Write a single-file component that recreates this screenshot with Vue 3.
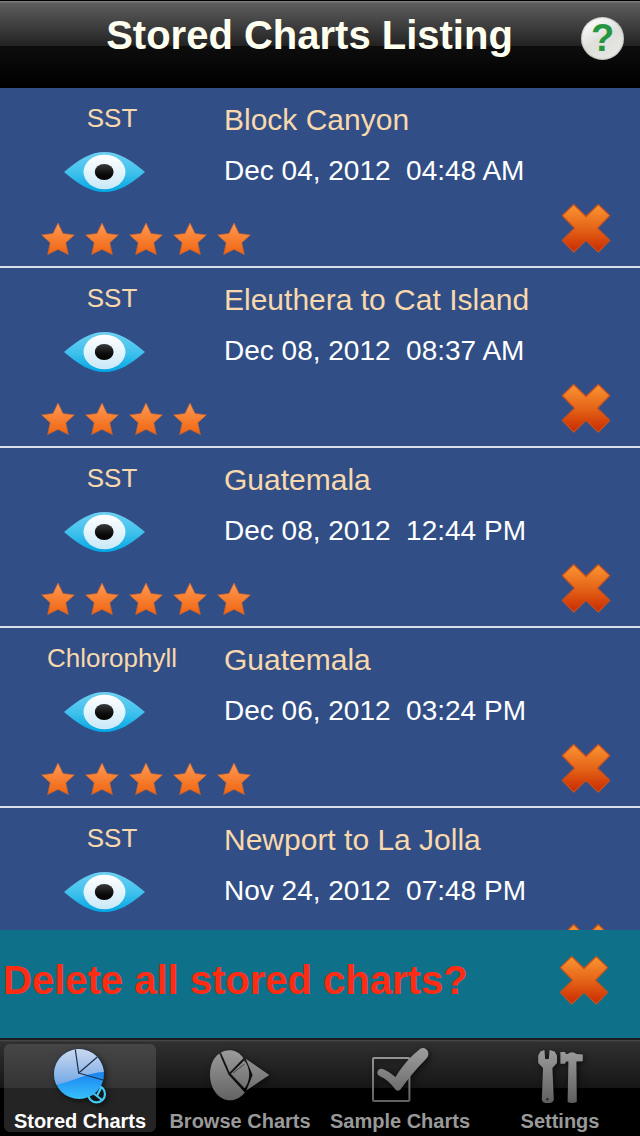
<template>
  <div class="app">
    <!-- Shared gradients and shapes -->
    <svg class="defs" width="0" height="0" aria-hidden="true">
      <defs>
        <linearGradient id="cross-fill" x1="0" y1="0" x2="0" y2="1">
          <stop offset="0" stop-color="#fb9432" />
          <stop offset="0.5" stop-color="#e56518" />
          <stop offset="1" stop-color="#c92a00" />
        </linearGradient>
        <linearGradient id="star-fill" x1="0" y1="0" x2="0" y2="1">
          <stop offset="0" stop-color="#ff9a52" />
          <stop offset="1" stop-color="#ee6410" />
        </linearGradient>
        <linearGradient id="eye-fill" x1="0" y1="0" x2="0" y2="1">
          <stop offset="0" stop-color="#6fd0f2" />
          <stop offset="0.55" stop-color="#3cc0ec" />
          <stop offset="1" stop-color="#00a6e4" />
        </linearGradient>
        <linearGradient id="iris-fill" x1="0" y1="0" x2="0" y2="1">
          <stop offset="0" stop-color="#ffffff" />
          <stop offset="1" stop-color="#c9e8f8" />
        </linearGradient>
        <linearGradient id="pupil-fill" x1="0" y1="0" x2="0" y2="1">
          <stop offset="0" stop-color="#3a3a3a" />
          <stop offset="0.6" stop-color="#0c0c0c" />
          <stop offset="1" stop-color="#000000" />
        </linearGradient>
        <linearGradient id="pie-top" x1="0" y1="0" x2="0" y2="1">
          <stop offset="0" stop-color="#cbd8ef" />
          <stop offset="1" stop-color="#72a8e6" />
        </linearGradient>
        <linearGradient id="pie-bottom" x1="0" y1="0" x2="0" y2="1">
          <stop offset="0.4" stop-color="#147cf0" />
          <stop offset="1" stop-color="#38c0fa" />
        </linearGradient>
        <linearGradient id="gray-fill" gradientUnits="userSpaceOnUse" x1="0" y1="0" x2="0" y2="60">
          <stop offset="0" stop-color="#a0a0a0" />
          <stop offset="1" stop-color="#5c5c5c" />
        </linearGradient>
        <symbol id="cross" viewBox="0 0 50 50">
          <path
            d="M12.7 1.5 L25 13.5 L37.3 1.5 L48.8 12.6 L36.5 25.2 L48.8 37.4 L37.3 49 L25 37.4 L12.7 49 L1.2 37.4 L13.5 25.2 L1.2 12.6Z"
            fill="url(#cross-fill)"
            stroke="#c9501c"
            stroke-width="1.2"
            stroke-linejoin="round"
          />
        </symbol>
        <symbol id="star" viewBox="0 0 34 34">
          <path
            d="M17 1 L22 11.4 L33.4 12.9 L24.8 20.8 L27.4 32.6 L17 27.4 L6.6 32.6 L9.2 20.8 L0.6 12.9 L12 11.4Z"
            fill="url(#star-fill)"
            stroke="#c9602c"
            stroke-width="0.6"
          />
        </symbol>
      </defs>
    </svg>

    <header class="header">
      <h1 class="title">Stored Charts Listing</h1>
      <button class="help-btn" aria-label="Help">?</button>
    </header>

    <!-- Chart list -->
    <ul class="chart-list">
      <li v-for="chart in charts" :key="chart.id" class="chart-row">
        <div class="chart-preview">
          <span class="chart-type">{{ chart.type }}</span>
          <button class="icon-btn eye-btn" :aria-label="`View ${chart.name}`">
            <svg width="81" height="40" viewBox="0 0 81 40">
              <path
                d="M0 20 C15 7 27 0 40.5 0 C54 0 66 7 81 20 C66 33 54 40 40.5 40 C27 40 15 33 0 20Z"
                fill="url(#eye-fill)"
              />
              <ellipse cx="40.5" cy="20" rx="21" ry="17.3" fill="url(#iris-fill)" />
              <ellipse cx="40.2" cy="20" rx="9.4" ry="8.1" fill="url(#pupil-fill)" />
            </svg>
          </button>
          <div class="stars" role="img" :aria-label="`${chart.stars} stars`">
            <svg v-for="n in chart.stars" :key="n" class="star" width="34" height="34">
              <use href="#star" />
            </svg>
          </div>
        </div>
        <div class="chart-info">
          <h2 class="chart-name">{{ chart.name }}</h2>
          <p class="chart-date">{{ chart.date }}&nbsp; {{ chart.time }}</p>
        </div>
        <button
          class="icon-btn delete-btn"
          :aria-label="`Delete ${chart.name}`"
          @click="deleteChart(chart.id)"
        >
          <svg width="50" height="50"><use href="#cross" /></svg>
        </button>
      </li>
    </ul>

    <!-- Delete all -->
    <section class="delete-all">
      <p class="delete-all-text">Delete all stored charts?</p>
      <button class="icon-btn" aria-label="Delete all stored charts" @click="deleteAll">
        <svg width="50" height="50"><use href="#cross" /></svg>
      </button>
    </section>

    <!-- Tab bar -->
    <nav class="tab-bar">
      <button
        v-for="tab in tabs"
        :key="tab.id"
        :class="['tab', { active: activeTab === tab.id }]"
        @click="activeTab = tab.id"
      >
        <svg v-if="tab.id === 'stored'" class="tab-icon" viewBox="0 0 100 60">
          <circle cx="66.6" cy="48" r="8.4" fill="#10181c" stroke="#44c8f4" stroke-width="2.2" />
          <path d="M58 43 L72 54 M67 50 L71.4 41" stroke="#44c8f4" stroke-width="2.2" />
          <circle cx="49" cy="28" r="25" fill="url(#pie-bottom)" />
          <path d="M26.4 38.8 A25 25 0 1 1 73.9 26 Q62 26.5 50 31.5 Q38 36 26.4 38.8Z" fill="url(#pie-top)" />
          <path
            d="M45.3 3.3 L48.7 27 L67.3 11 M48.7 27 L73 34"
            fill="none"
            stroke="#20304a"
            stroke-width="1.2"
          />
        </svg>
        <svg v-else-if="tab.id === 'browse'" class="tab-icon" viewBox="0 0 100 60">
          <g fill="url(#gray-fill)">
            <path d="M29.3 7.6 C23 12 20 20 20 29 C20 43 29 54.3 40 54.3 C46 54.3 51 51 54.8 46.4 L38.6 28.8Z" />
            <path d="M31 6.6 C38 2.4 48 3.6 53.4 12.2 L39.6 26.6Z" />
            <path d="M40.8 27.8 L54.2 14.4 C61 22 60.5 35 54.6 42.2Z" />
            <path d="M55.8 12.8 L79.3 29 L56.4 44.6 L62.6 29Z" />
          </g>
          <path d="M43 27 L54.5 18" stroke="#444" stroke-width="1" />
        </svg>
        <svg v-else-if="tab.id === 'sample'" class="tab-icon" viewBox="0 0 100 60">
          <rect
            x="23"
            y="12"
            width="36.4"
            height="43"
            rx="1"
            fill="none"
            stroke="url(#gray-fill)"
            stroke-width="2"
          />
          <path
            d="M27.4 26.4 C27.6 23 31 22 34 23.4 C38 25.2 42 28 45.6 31 C52.4 20 61 10 70.6 2.6 C74 0.4 78.6 3.6 78.4 8 C78.2 10.6 77 12 75.6 13.4 C66 22.6 57.6 33.6 50.8 43 C49.2 45.2 46.6 45.2 45 43 C41 37.4 35.6 32.6 30.4 30.4 C28.4 29.6 27.2 28.4 27.4 26.4Z"
            fill="url(#gray-fill)"
          />
        </svg>
        <svg v-else class="tab-icon" viewBox="0 0 100 60">
          <g fill="url(#gray-fill)">
            <path
              d="M34.4 4 L35.2 13 L38.8 13 L39.6 4 L44.6 5.6 L47 9.6 L47 17 L42.4 22 L43.8 53.4 Q43.4 57 37.8 57 Q32 57 31.8 53.4 L33 22 L28.2 17 L28.2 9.6 L30.4 5.6Z"
            />
            <path
              d="M50.4 6 L55 6 L55.8 8 L57.6 8 Q62 4.6 66.6 8 L72.8 8.6 L72.8 15.2 L66.4 15.4 L66.8 56 Q62 57.8 57.6 56 L58.4 15.6 L56.2 15.4 L55 17.8 L50.4 17.8Z"
            />
          </g>
          <circle cx="37.4" cy="53.2" r="1.2" fill="#2a2a2a" />
        </svg>
        <span class="tab-label">{{ tab.label }}</span>
      </button>
    </nav>
  </div>
</template>

<script setup>
import { ref } from 'vue'

const charts = ref([
  { id: 1, type: 'SST', name: 'Block Canyon', date: 'Dec 04, 2012', time: '04:48 AM', stars: 5 },
  { id: 2, type: 'SST', name: 'Eleuthera to Cat Island', date: 'Dec 08, 2012', time: '08:37 AM', stars: 4 },
  { id: 3, type: 'SST', name: 'Guatemala', date: 'Dec 08, 2012', time: '12:44 PM', stars: 5 },
  { id: 4, type: 'Chlorophyll', name: 'Guatemala', date: 'Dec 06, 2012', time: '03:24 PM', stars: 5 },
  { id: 5, type: 'SST', name: 'Newport to La Jolla', date: 'Nov 24, 2012', time: '07:48 PM', stars: 5 }
])

const tabs = [
  { id: 'stored', label: 'Stored Charts' },
  { id: 'browse', label: 'Browse Charts' },
  { id: 'sample', label: 'Sample Charts' },
  { id: 'settings', label: 'Settings' }
]

const activeTab = ref('stored')

const deleteChart = (id) => {
  charts.value = charts.value.filter((chart) => chart.id !== id)
}

const deleteAll = () => {
  charts.value = []
}
</script>

<style>
body {
  margin: 0;
  background: #000;
}
</style>

<style scoped>
.app {
  display: flex;
  flex-direction: column;
  height: 100vh;
  overflow: hidden;
  background: #314f86;
  font-family: 'Liberation Sans', Helvetica, Arial, sans-serif;
}

.defs {
  position: absolute;
}

button {
  font-family: inherit;
  border: none;
  padding: 0;
  cursor: pointer;
}

svg {
  display: block;
}

h1,
h2,
p {
  margin: 0;
  font-weight: normal;
}

/* Header */
.header {
  display: flex;
  align-items: flex-start;
  box-sizing: border-box;
  height: 88px;
  padding: 12px 16px 0 38px;
  flex-shrink: 0;
  background: linear-gradient(
    #000 0,
    #000 1px,
    #858585 1px,
    #636363 3px,
    #5c5c5c 4px,
    #222 46px,
    #0d0d0d 46px,
    #000 86px
  );
}

.title {
  flex: 1;
  text-align: center;
  font-size: 40px;
  font-weight: bold;
  line-height: 46px;
  color: #fffff0;
}

.help-btn {
  width: 43px;
  height: 43px;
  margin-top: 5px;
  border-radius: 50%;
  background: linear-gradient(150deg, #fff 10%, #dededa 50%, #e8e8e4 90%);
  box-shadow: inset 0 0 2px #777;
  color: #25963f;
  font-size: 38px;
  font-weight: bold;
  line-height: 43px;
}

/* Chart list */
.chart-list {
  flex: 1;
  min-height: 0;
  margin: 0;
  padding: 0;
  overflow: hidden;
  list-style: none;
}

.chart-row {
  display: grid;
  grid-template-columns: 224px 1fr auto;
  padding: 14px 29px 12px 0;
  border-bottom: 2px solid #dcdfe8;
}

.chart-preview {
  display: flex;
  flex-direction: column;
}

.chart-type {
  text-align: center;
  font-size: 26px;
  line-height: 32px;
  color: #f8d8ac;
}

.icon-btn {
  background: none;
}

.eye-btn {
  align-self: flex-start;
  margin: 18px 0 30px 64px;
}

.stars {
  display: flex;
  gap: 10px;
  height: 32px;
  padding-left: 41px;
}

.star {
  flex-shrink: 0;
}

.chart-name {
  font-size: 30px;
  line-height: 36px;
  color: #f8d8ac;
}

.chart-date {
  margin-top: 16px;
  font-size: 28px;
  line-height: 34px;
  color: #fff;
}

.delete-btn {
  align-self: end;
  margin-bottom: 1px;
}

/* Delete all */
.delete-all {
  display: flex;
  align-items: center;
  justify-content: space-between;
  box-sizing: border-box;
  height: 108px;
  padding: 0 31px 8px 3px;
  flex-shrink: 0;
  background: #0f7189;
}

.delete-all-text {
  font-size: 40px;
  font-weight: bold;
  line-height: 46px;
  color: #ff2c14;
}

/* Tab bar */
.tab-bar {
  display: flex;
  box-sizing: border-box;
  height: 98px;
  padding-top: 6px;
  flex-shrink: 0;
  background: linear-gradient(
    #1c1c22 0,
    #1c1c22 2px,
    #4c4c4c 2px,
    #303030 4px,
    #161616 50px,
    #000 50px
  );
}

.tab {
  flex: 1;
  display: flex;
  flex-direction: column;
  align-items: center;
  gap: 4px;
  height: 88px;
  margin: 0 4px;
  padding-top: 2px;
  border-radius: 6px;
  background: none;
  color: #999;
}

.tab.active {
  background: linear-gradient(#464646 0, #343434 44px, #242424 44px);
  color: #fff;
}

.tab-icon {
  width: 100px;
  height: 60px;
  filter: drop-shadow(2px 2px 3px rgba(0, 0, 0, 0.6));
}

.tab-label {
  font-size: 20px;
  font-weight: bold;
  line-height: 22px;
  white-space: nowrap;
}
</style>
